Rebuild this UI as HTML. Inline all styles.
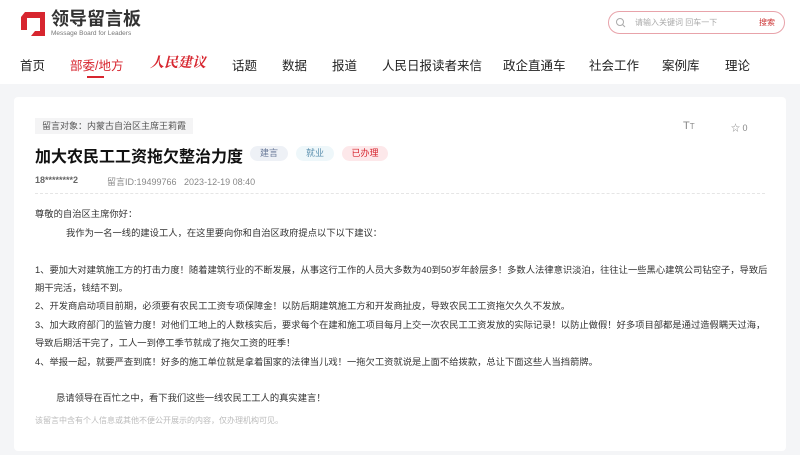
<!DOCTYPE html>
<html><head><meta charset="utf-8">
<style>
*{margin:0;padding:0;box-sizing:border-box}
body{width:800px;height:455px;overflow:hidden;background:#f4f5f7;font-family:"Liberation Sans","Noto Sans CJK SC",sans-serif;color:#333;position:relative}
.hdr{position:absolute;left:0;top:0;width:800px;height:84px;background:#fff}
.a{position:absolute;white-space:nowrap}
.nav{top:55px;font-size:12.5px;color:#222}
.card{position:absolute;left:14px;top:97px;width:772px;height:354px;background:#fff;border-radius:4px}
.t{font-size:9.3px;color:#333;line-height:11px}
.tag{position:absolute;top:146px;height:15px;border-radius:8px;font-size:9px;line-height:15px;text-align:center}
</style></head><body>
<div class="hdr"></div>
<svg class="a" style="left:20px;top:11px" width="26" height="26" viewBox="20 11 26 26"><path d="M25 12H45V36H31L35 31H40V18H27V30H21V17Z" fill="#d7262f"/></svg>
<div class="a" style="left:51px;top:10px;font-size:18px;line-height:19px;font-weight:bold;color:#333">领导留言板</div>
<div class="a" style="left:51px;top:30px;font-size:6.5px;line-height:7px;color:#777">Message Board for Leaders</div>
<div class="a" style="left:608px;top:11px;width:177px;height:23px;border:1px solid #e8a3aa;border-radius:12px"></div>
<svg class="a" style="left:615px;top:17px" width="11" height="11" viewBox="0 0 11 11"><circle cx="5" cy="5" r="3.5" fill="none" stroke="#aaa" stroke-width="1"/><path d="M7.5 7.5L10 10" stroke="#aaa"/></svg>
<div class="a" style="left:635px;top:17px;font-size:8px;color:#aaa">请输入关键词 回车一下</div>
<div class="a" style="left:759px;top:17px;font-size:8px;color:#c33">搜索</div>
<div class="a nav" style="left:20px">首页</div>
<div class="a nav" style="left:70px;color:#d7262f">部委/地方</div>
<div class="a" style="left:87px;top:76px;width:17px;height:2px;background:#d7262f"></div>
<div class="a nav" style="left:150px;top:52px;color:#d7262f;font-family:'Noto Serif CJK SC',serif;font-style:italic;font-weight:bold;font-size:14px">人民建议</div>
<div class="a nav" style="left:232px">话题</div>
<div class="a nav" style="left:282px">数据</div>
<div class="a nav" style="left:332px">报道</div>
<div class="a nav" style="left:382px">人民日报读者来信</div>
<div class="a nav" style="left:503px">政企直通车</div>
<div class="a nav" style="left:589px">社会工作</div>
<div class="a nav" style="left:662px">案例库</div>
<div class="a nav" style="left:725px">理论</div>

<div class="card"></div>
<div class="a" style="left:35px;top:118px;height:16px;padding:0 7px;background:#f4f4f5;font-size:9px;line-height:16px;color:#555">留言对象：内蒙古自治区主席王莉霞</div>
<div class="a" style="left:35px;top:143px;font-size:16px;font-weight:bold;color:#111">加大农民工工资拖欠整治力度</div>
<div class="tag" style="left:250px;width:38px;background:#eef1f6;color:#6a7a99">建言</div>
<div class="tag" style="left:296px;width:38px;background:#eef7fa;color:#5a8fae">就业</div>
<div class="tag" style="left:342px;width:46px;background:#fde8ea;color:#d7262f">已办理</div>
<div class="a" style="left:683px;top:120px;font-size:11px;color:#888">T<span style="font-size:8px">T</span></div>
<div class="a" style="left:731px;top:121px;font-size:9px;color:#888">☆ 0</div>
<div class="a" style="left:35px;top:175px;font-size:9px;color:#666;font-weight:bold">18********2</div>
<div class="a" style="left:107px;top:175px;font-size:9px;color:#888">留言ID:19499766&nbsp;&nbsp;&nbsp;2023-12-19 08:40</div>
<div class="a" style="left:35px;top:193px;width:730px;border-top:1px dashed #e5e5e5"></div>
<div class="a t" style="left:35px;top:209px">尊敬的自治区主席你好：</div>
<div class="a t" style="left:66px;top:228px">我作为一名一线的建设工人，在这里要向你和自治区政府提点以下以下建议：</div>
<div class="a t" style="left:35px;top:265px">1、要加大对建筑施工方的打击力度！随着建筑行业的不断发展，从事这行工作的人员大多数为40到50岁年龄层多！多数人法律意识淡泊，往往让一些黑心建筑公司钻空子，导致后</div>
<div class="a t" style="left:35px;top:283px">期干完活，钱结不到。</div>
<div class="a t" style="left:35px;top:301px">2、开发商启动项目前期，必须要有农民工工资专项保障金！以防后期建筑施工方和开发商扯皮，导致农民工工资拖欠久久不发放。</div>
<div class="a t" style="left:35px;top:320px">3、加大政府部门的监管力度！对他们工地上的人数核实后，要求每个在建和施工项目每月上交一次农民工工资发放的实际记录！以防止做假！好多项目部都是通过造假瞒天过海，</div>
<div class="a t" style="left:35px;top:338px">导致后期活干完了，工人一到停工季节就成了拖欠工资的旺季！</div>
<div class="a t" style="left:35px;top:357px">4、举报一起，就要严查到底！好多的施工单位就是拿着国家的法律当儿戏！一拖欠工资就说是上面不给拨款，总让下面这些人当挡箭牌。</div>
<div class="a t" style="left:56px;top:393px">恳请领导在百忙之中，看下我们这些一线农民工工人的真实建言！</div>
<div class="a" style="left:35px;top:415px;font-size:8px;color:#bbb">该留言中含有个人信息或其他不便公开展示的内容，仅办理机构可见。</div>
</body></html>
